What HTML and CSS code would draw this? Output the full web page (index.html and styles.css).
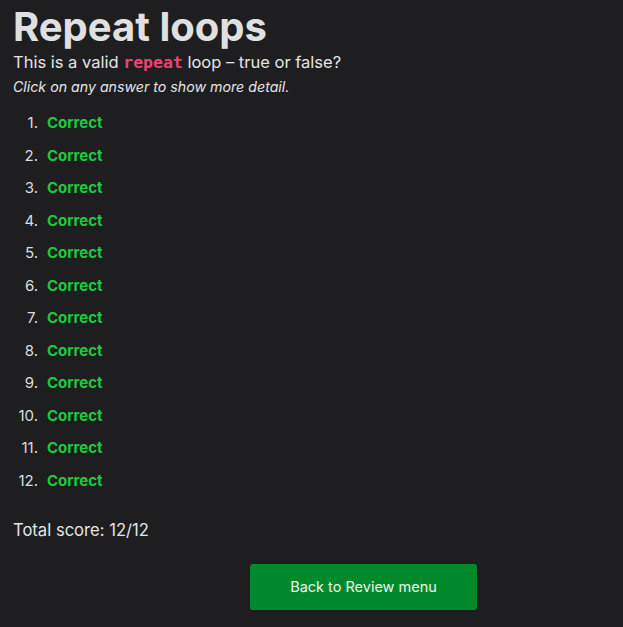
FILE: index.html
```html
<!DOCTYPE html>
<html>
<head>
<meta charset="utf-8">
<link rel="stylesheet" href="styles.css">
</head>
<body>
<main class="page">
  <h1 class="title">Repeat loops</h1>
  <p class="question">This is a valid <code class="kw">repeat</code> loop – true or false?</p>
  <p class="hint">Click on any answer to show more detail.</p>
  <ol class="answers">
    <li><span class="ok">Correct</span></li>
    <li><span class="ok">Correct</span></li>
    <li><span class="ok">Correct</span></li>
    <li><span class="ok">Correct</span></li>
    <li><span class="ok">Correct</span></li>
    <li><span class="ok">Correct</span></li>
    <li><span class="ok">Correct</span></li>
    <li><span class="ok">Correct</span></li>
    <li><span class="ok">Correct</span></li>
    <li><span class="ok">Correct</span></li>
    <li><span class="ok">Correct</span></li>
    <li><span class="ok">Correct</span></li>
  </ol>
  <p class="score">Total score: 12/12</p>
  <div class="actions">
    <button class="back">Back to Review menu</button>
  </div>
</main>
</body>
</html>
```
FILE: styles.css
```css
html, body {
  margin: 0;
  padding: 0;
  background: #1e1e20;
}
body {
  font-family: Inter, "Noto Sans", sans-serif;
  color: #e4e4e6;
}
.page {
  padding: 0 13px;
}
.title {
  margin: 0;
  padding-top: 4px;
  font-size: 40px;
  font-weight: 700;
  line-height: 46px;
  color: #e0e0e2;
}
.question {
  margin: 0;
  font-size: 16.5px;
  line-height: 24px;
}
.kw {
  font-family: "DejaVu Sans Mono", monospace;
  font-weight: 700;
  font-size: 16.5px;
  color: #ec4470;
}
.hint {
  margin: 2px 0 0;
  font-size: 14.2px;
  font-style: italic;
  line-height: 20px;
}
.answers {
  margin: 16px 0 0;
  padding: 0;
  list-style: none;
  font-size: 15px;
  counter-reset: item;
}
.answers li {
  line-height: 20px;
  margin-bottom: 12.5px;
  counter-increment: item;
}
.answers li::before {
  content: counter(item) ".";
  display: inline-block;
  width: 25px;
  margin-right: 9px;
  text-align: right;
  color: #dcdcde;
}
.ok {
  color: #1ccb3c;
  font-weight: 700;
}
.score {
  margin: 29px 0 0;
  font-size: 16.6px;
  line-height: 20px;
}
.actions {
  margin-top: 24px;
  padding-left: 237px;
}
.back {
  width: 227px;
  height: 46px;
  border: none;
  border-radius: 3px;
  background: #008a2b;
  color: #eef5ee;
  font-family: Inter, "Noto Sans", sans-serif;
  font-size: 14.5px;
}
```
